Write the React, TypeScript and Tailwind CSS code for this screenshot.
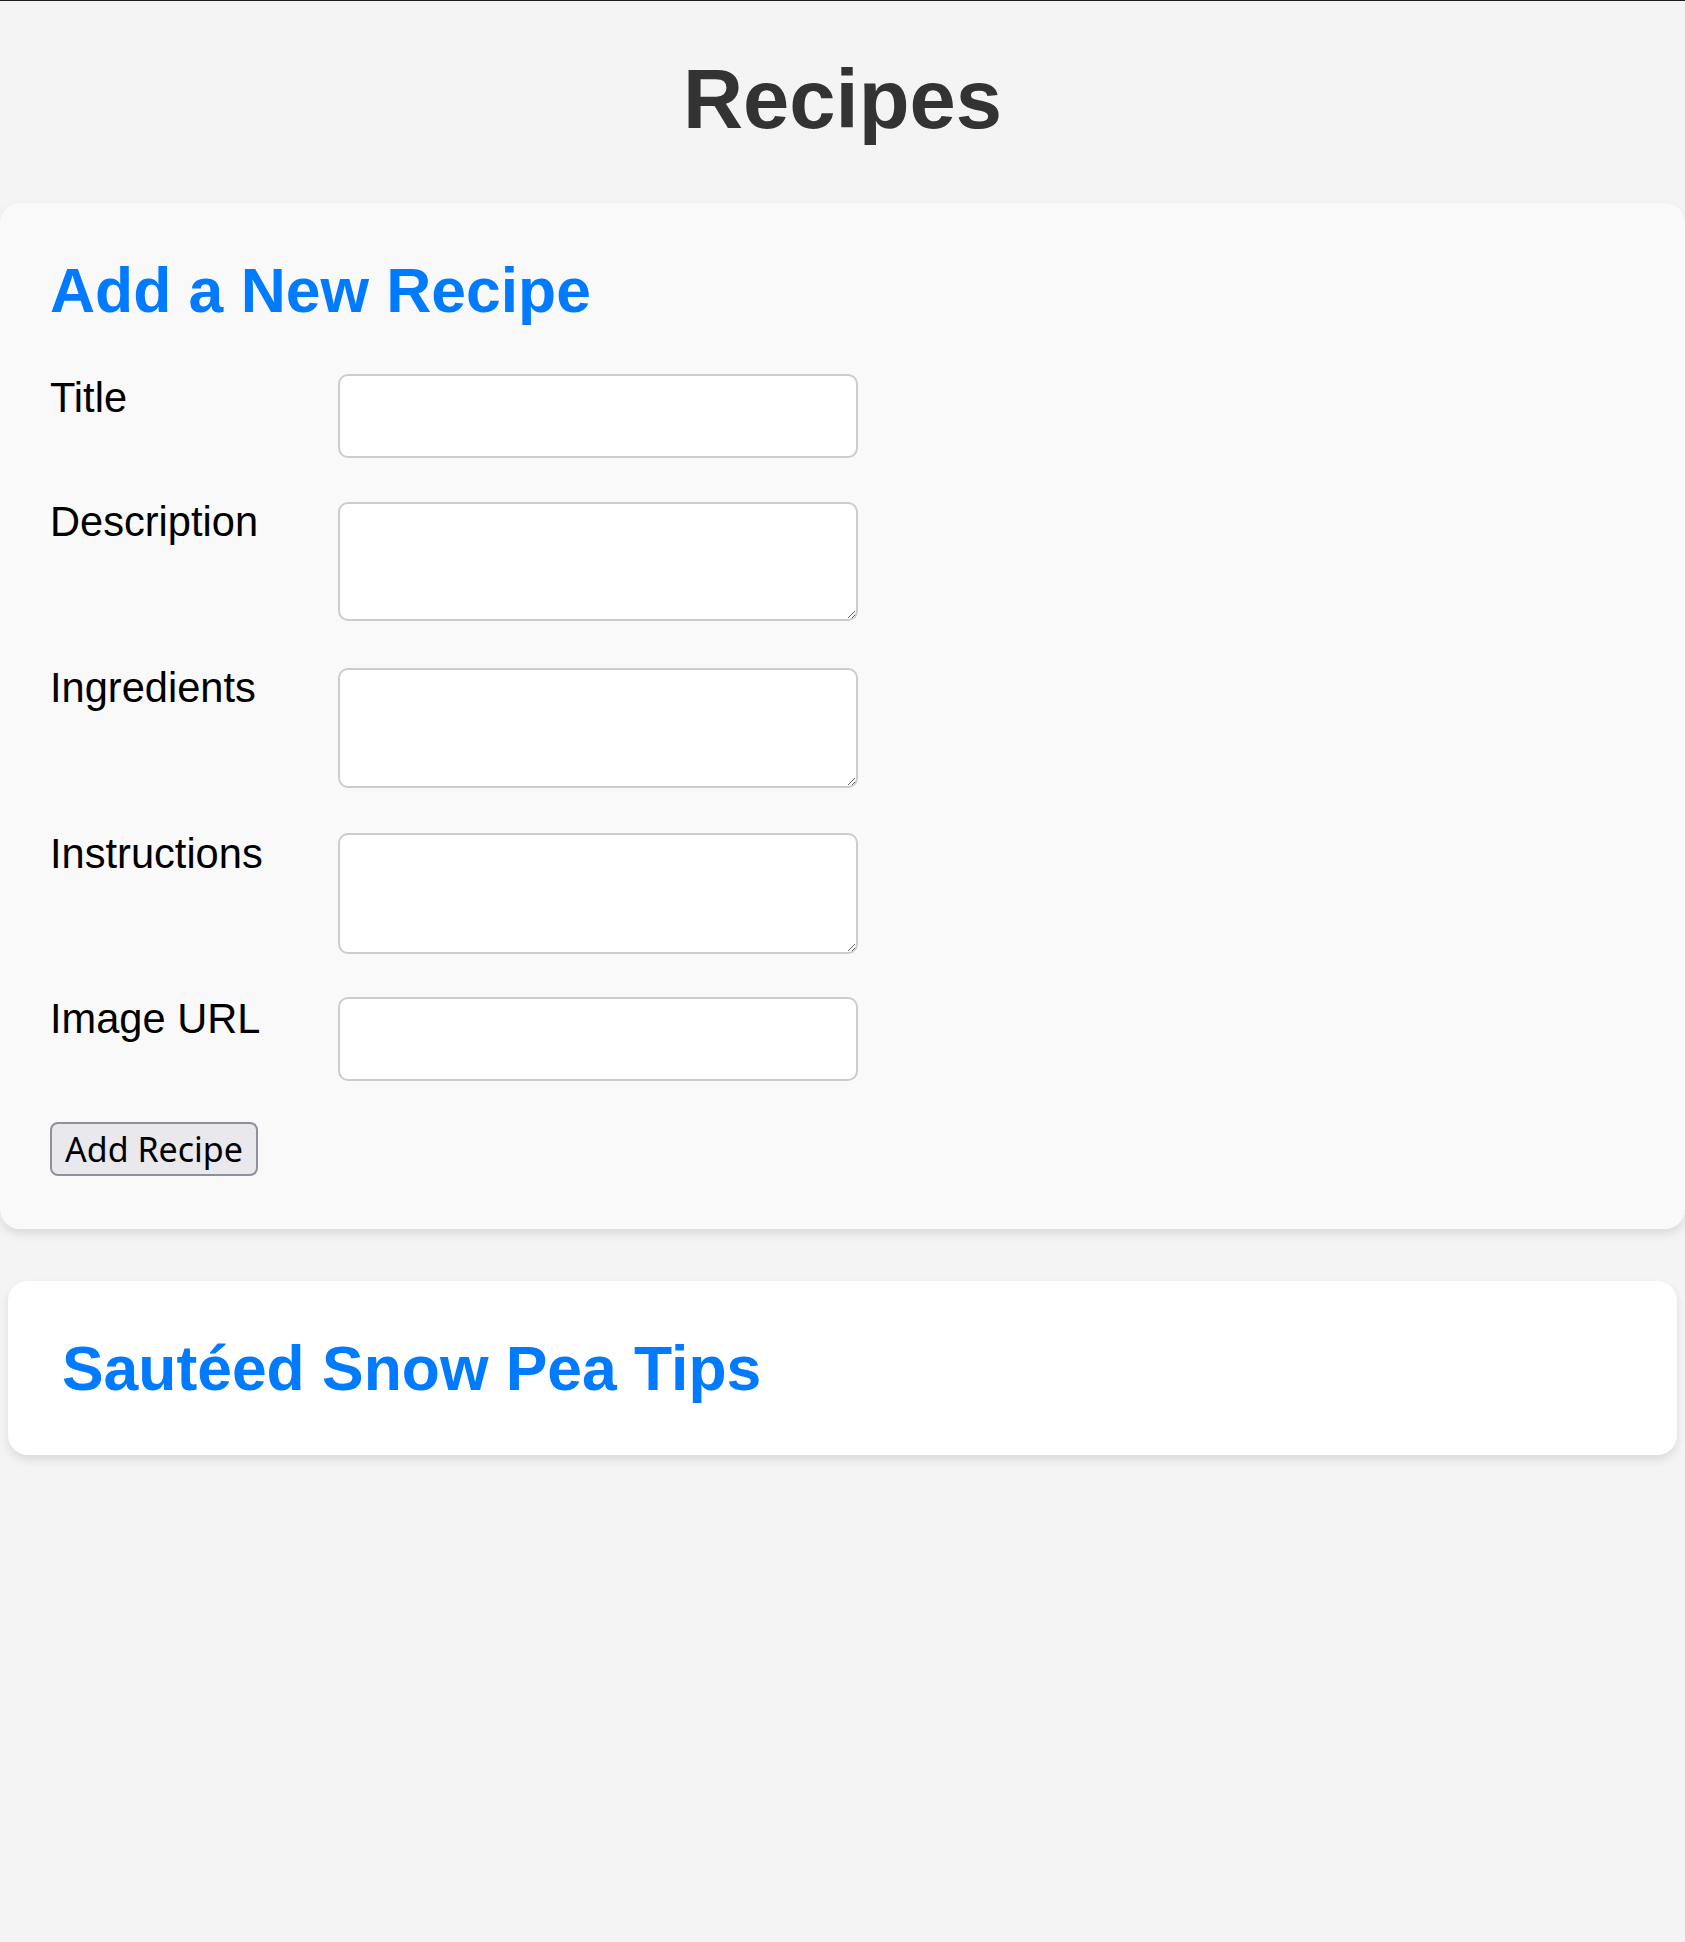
import React from "react";

function Row({
  label,
  multiline,
  h,
  rowMt,
  ctrlMt,
}: {
  label: string;
  multiline?: boolean;
  h: string;
  rowMt: string;
  ctrlMt: string;
}) {
  const cls = `block w-[520px] ${h} ${ctrlMt} bg-white border-2 border-[#cccccc] rounded-[10px] outline-none`;
  return (
    <div className={`flex items-start ${rowMt}`}>
      <label className="w-[250px] mr-[38px] text-[41.6px] leading-[48px] text-black">
        {label}
      </label>
      {multiline ? (
        <textarea className={`${cls} resize-y`} />
      ) : (
        <input type="text" className={cls} />
      )}
    </div>
  );
}

export default function App() {
  return (
    <div
      className="min-h-[1942px] bg-[#f4f4f4]"
      style={{ fontFamily: '"Liberation Sans", Arial, sans-serif' }}
    >
      <div className="h-px bg-[#1e1e1e]" />
      <h1 className="pt-[51px] text-center text-[83.2px] leading-[96px] font-bold text-[#333333]">
        Recipes
      </h1>
      <div className="mt-[55px] bg-[#f9f9f9] rounded-[20px] shadow-[0_5px_10px_rgba(0,0,0,0.1)] px-[50px] pt-[52px] pb-[53px]">
        <h2 className="text-[62.4px] leading-[72px] font-bold text-[#007bff]">
          Add a New Recipe
        </h2>
        <Row label="Title" h="h-[84px]" rowMt="mt-[47px]" ctrlMt="mt-0" />
        <Row label="Description" multiline h="h-[119px]" rowMt="mt-[40px]" ctrlMt="mt-[4px]" />
        <Row label="Ingredients" multiline h="h-[120px]" rowMt="mt-[43px]" ctrlMt="mt-[4px]" />
        <Row label="Instructions" multiline h="h-[121px]" rowMt="mt-[42px]" ctrlMt="mt-[3px]" />
        <Row label="Image URL" h="h-[84px]" rowMt="mt-[41px]" ctrlMt="mt-[2px]" />
        <button
          className="mt-[41px] block h-[54px] w-[208px] bg-[#e9e9ed] border-2 border-[#8f8f9d] rounded-[8px] text-[34px] leading-none text-black"
          style={{ fontFamily: '"Noto Sans", sans-serif' }}
        >
          Add Recipe
        </button>
      </div>
      <div className="mt-[52px] mx-[8px] bg-white rounded-[20px] shadow-[0_5px_10px_rgba(0,0,0,0.1)] px-[54px] pt-[52px] pb-[50px]">
        <h2 className="text-[62.4px] leading-[72px] font-bold text-[#007bff]">
          Sautéed Snow Pea Tips
        </h2>
      </div>
    </div>
  );
}
